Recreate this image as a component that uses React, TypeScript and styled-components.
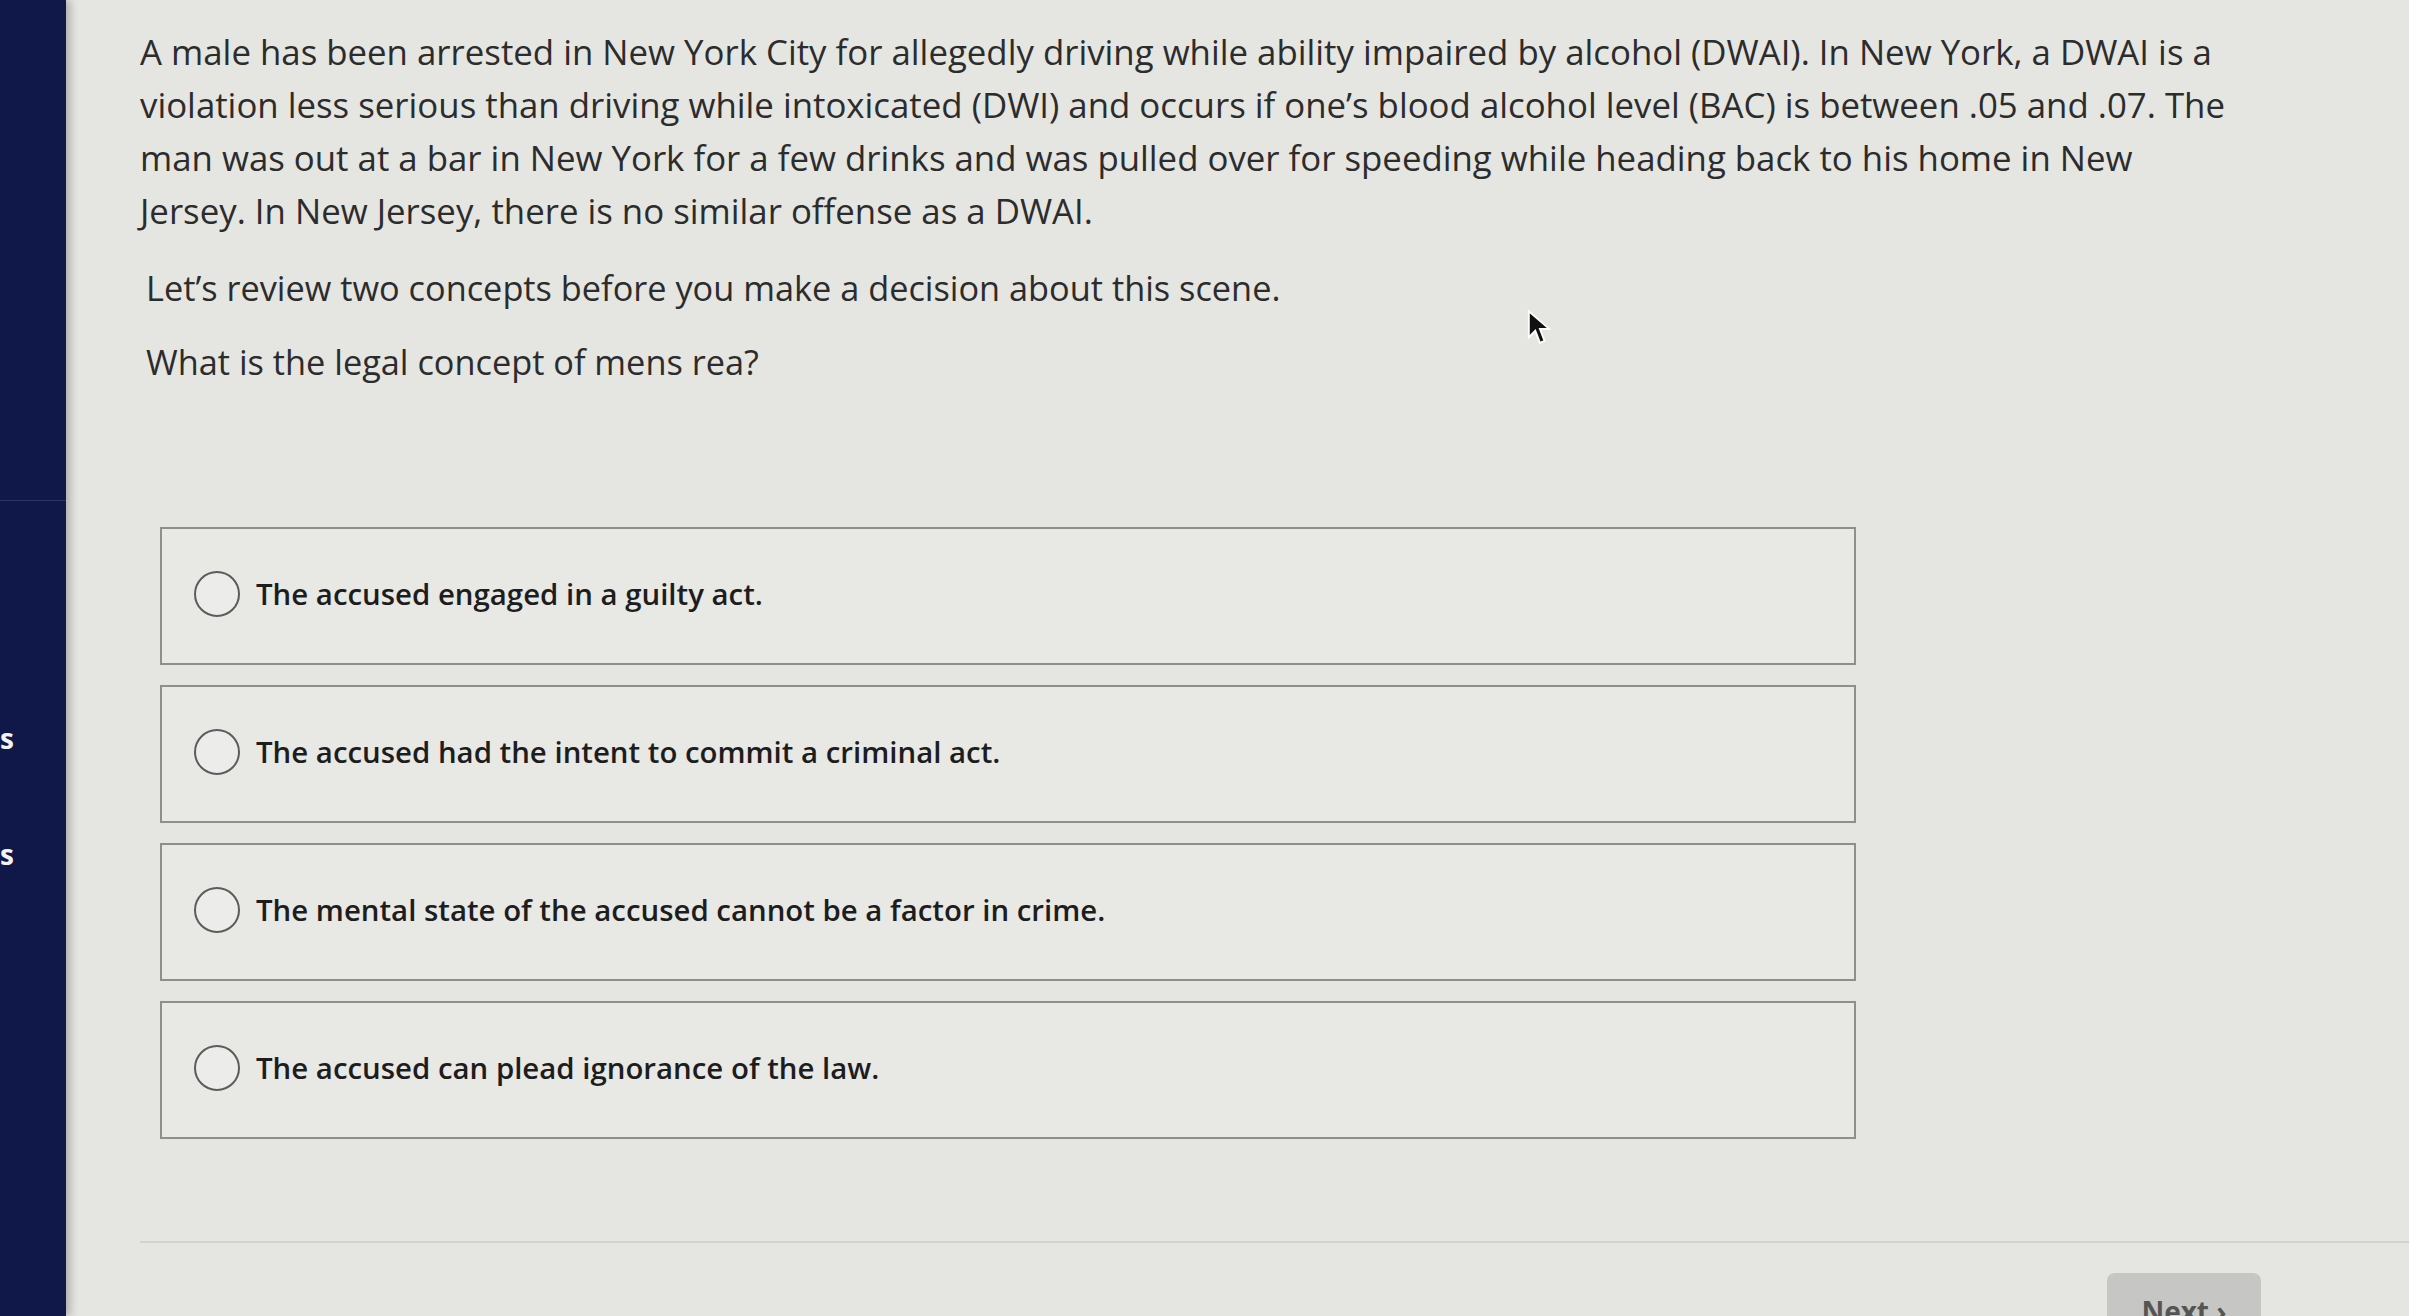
import React from "react";
import styled, { createGlobalStyle } from "styled-components";

const GlobalStyle = createGlobalStyle`
  html, body {
    margin: 0;
    padding: 0;
    background: #e5e5e2;
    font-family: "Open Sans", "Noto Sans", sans-serif;
    color: #2b2b2b;
  }
  #root {
    height: 1316px;
    overflow: hidden;
  }
`;

const Page = styled.div`
  display: flex;
  height: 1316px;
  overflow: hidden;
  background: #e5e5e2;
`;

const Sidebar = styled.nav`
  width: 66px;
  flex-shrink: 0;
  background: #0f1848;
  display: flex;
  flex-direction: column;
  box-shadow: 4px 0 8px rgba(0, 0, 0, 0.25);
`;

const SideTop = styled.div`
  height: 500px;
  border-bottom: 1px solid #2a3466;
`;

const SideLabel = styled.div<{ $gap: number }>`
  margin-top: ${(p) => p.$gap}px;
  color: #f2f2f2;
  font-size: 28px;
  font-weight: 700;
  line-height: 30px;
`;

const Main = styled.main`
  flex: 1;
  position: relative;
  padding: 25px 0 0 74px;
  display: flex;
  flex-direction: column;
`;

const Passage = styled.p`
  margin: 0;
  font-size: 34.8px;
  line-height: 53px;
  white-space: nowrap;
  color: #2c2c2c;
`;

const Prompt = styled.p<{ $top: number }>`
  margin: ${(p) => p.$top}px 0 0 6px;
  font-size: 34.3px;
  line-height: 53px;
  color: #2c2c2c;
`;

const Choices = styled.div`
  margin: 139px 0 0 20px;
  width: 1696px;
  display: flex;
  flex-direction: column;
  gap: 20px;
`;

const Choice = styled.label`
  height: 138px;
  box-sizing: border-box;
  border: 2px solid #8e8e8c;
  background: #e8e8e5;
  display: flex;
  align-items: center;
  gap: 16px;
  padding: 0 0 4px 32px;
  cursor: pointer;
`;

const Radio = styled.span`
  width: 46px;
  height: 46px;
  box-sizing: border-box;
  border-radius: 50%;
  border: 2.5px solid #5c5c5c;
  background: #ececea;
  flex-shrink: 0;
`;

const ChoiceText = styled.span`
  font-size: 29.4px;
  font-weight: 600;
  color: #1d1d1d;
`;

const Divider = styled.hr`
  margin: 102px 0 0 0;
  border: none;
  border-top: 2px solid #d2d2cf;
`;

const Footer = styled.div`
  display: flex;
  justify-content: flex-end;
  padding: 30px 148px 0 0;
`;

const NextButton = styled.button`
  width: 154px;
  height: 76px;
  border: none;
  border-radius: 8px;
  background: #c6c6c4;
  color: #555;
  font-family: "Open Sans", sans-serif;
  font-size: 28px;
  font-weight: 700;
`;

// mouse pointer caught in the screenshot
const Pointer = styled.svg`
  position: absolute;
  left: 1461px;
  top: 309px;
`;

const choices = [
  "The accused engaged in a guilty act.",
  "The accused had the intent to commit a criminal act.",
  "The mental state of the accused cannot be a factor in crime.",
  "The accused can plead ignorance of the law.",
];

export default function App() {
  return (
    <>
      <GlobalStyle />
      <Page>
        <Sidebar>
          <SideTop />
          <SideLabel $gap={222}>s</SideLabel>
          <SideLabel $gap={86}>s</SideLabel>
        </Sidebar>
        <Main>
          <Passage>
            A male has been arrested in New York City for allegedly driving while ability impaired by alcohol (DWAI). In New York, a DWAI is a
            <br />
            violation less serious than driving while intoxicated (DWI) and occurs if one’s blood alcohol level (BAC) is between .05 and .07. The
            <br />
            man was out at a bar in New York for a few drinks and was pulled over for speeding while heading back to his home in New
            <br />
            Jersey. In New Jersey, there is no similar offense as a DWAI.
          </Passage>
          <Prompt $top={24}>Let’s review two concepts before you make a decision about this scene.</Prompt>
          <Prompt $top={21}>What is the legal concept of mens rea?</Prompt>
          <Choices>
            {choices.map((c) => (
              <Choice key={c}>
                <Radio />
                <ChoiceText>{c}</ChoiceText>
              </Choice>
            ))}
          </Choices>
          <Divider />
          <Footer>
            <NextButton>Next ›</NextButton>
          </Footer>
          <Pointer width="24" height="38" viewBox="0 0 13 20">
            <path d="M1 1 L1 15 L4.5 11.5 L7 18 L9.5 17 L7 10.5 L12 10.5 Z" fill="#111" stroke="#fff" strokeWidth="1" />
          </Pointer>
        </Main>
      </Page>
    </>
  );
}
